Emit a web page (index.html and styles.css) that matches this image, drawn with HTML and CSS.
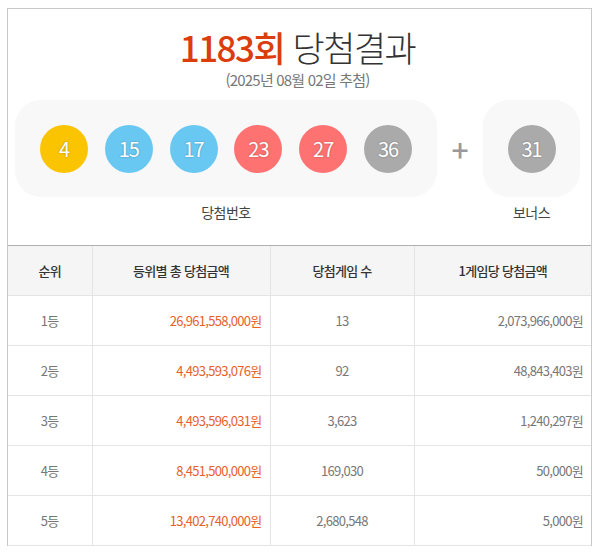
FILE: index.html
```html
<!DOCTYPE html>
<html lang="ko">
<head>
<meta charset="utf-8">
<title>1183회 당첨결과</title>
<link rel="stylesheet" href="styles.css">
</head>
<body>
<div class="wrap">
  <div class="top">
    <h2 class="title"><strong>1183회</strong> 당첨결과</h2>
    <p class="date">(2025년 08월 02일 추첨)</p>
    <div class="nums">
      <div class="group">
        <div class="panel win">
          <span class="ball yellow">4</span>
          <span class="ball blue">15</span>
          <span class="ball blue">17</span>
          <span class="ball red">23</span>
          <span class="ball red">27</span>
          <span class="ball gray">36</span>
        </div>
        <div class="label">당첨번호</div>
      </div>
      <div class="plus">+</div>
      <div class="group">
        <div class="panel bonus">
          <span class="ball gray">31</span>
        </div>
        <div class="label">보너스</div>
      </div>
    </div>
  </div>
  <table class="result">
    <colgroup>
      <col class="c1"><col class="c2"><col class="c3"><col class="c4">
    </colgroup>
    <thead>
      <tr><th>순위</th><th>등위별 총 당첨금액</th><th>당첨게임 수</th><th>1게임당 당첨금액</th></tr>
    </thead>
    <tbody>
      <tr><td class="ctr">1등</td><td class="amt">26,961,558,000원</td><td class="ctr">13</td><td class="rt">2,073,966,000원</td></tr>
      <tr><td class="ctr">2등</td><td class="amt">4,493,593,076원</td><td class="ctr">92</td><td class="rt">48,843,403원</td></tr>
      <tr><td class="ctr">3등</td><td class="amt">4,493,596,031원</td><td class="ctr">3,623</td><td class="rt">1,240,297원</td></tr>
      <tr><td class="ctr">4등</td><td class="amt">8,451,500,000원</td><td class="ctr">169,030</td><td class="rt">50,000원</td></tr>
      <tr><td class="ctr">5등</td><td class="amt">13,402,740,000원</td><td class="ctr">2,680,548</td><td class="rt">5,000원</td></tr>
    </tbody>
  </table>
</div>
</body>
</html>
```
FILE: styles.css
```css
* { box-sizing: border-box; }
body {
  margin: 0;
  background: #fff;
  font-family: "Noto Sans CJK KR", "Noto Sans", sans-serif;
  color: #333;
}
.wrap {
  margin: 8px 0 0 7px;
  width: 585px;
  border: 1px solid #c9c9c9;
  border-bottom: none;
}
.top {
  padding: 16px 11px 23px 7px;
  text-align: center;
}
.title {
  margin: 0;
  font-size: 35px;
  line-height: 44px;
  font-weight: 300;
  letter-spacing: -1.5px;
  color: #333;
}
.title strong {
  color: #db3d0d;
  font-weight: 500;
}
.date {
  margin: 1px 0 0;
  font-size: 15px;
  line-height: 20px;
  color: #777;
  letter-spacing: -0.8px;
}
.nums {
  margin-top: 10px;
  display: flex;
  align-items: flex-start;
}
.group {
  display: flex;
  flex-direction: column;
  align-items: center;
}
.panel {
  height: 97px;
  background: #f8f8f8;
  border-radius: 26px;
  display: flex;
  align-items: center;
}
.win {
  width: 422px;
  padding-left: 25px;
  gap: 16.8px;
}
.bonus {
  width: 97px;
  justify-content: center;
}
.plus {
  width: 46px;
  height: 97px;
  display: flex;
  align-items: center;
  justify-content: center;
  font-size: 30px;
  font-weight: 500;
  color: #999;
}
.ball {
  width: 48px;
  height: 48px;
  border-radius: 50%;
  display: flex;
  align-items: center;
  justify-content: center;
  color: #fff;
  font-size: 20px;
  font-weight: 400;
  letter-spacing: -1px;
  text-shadow: 0 0 2px rgba(0,0,0,0.35);
}
.yellow { background: #fbc400; }
.blue { background: #69c8f2; }
.red { background: #ff7272; }
.gray { background: #aaaaaa; }
.label {
  margin-top: 5px;
  font-size: 14px;
  line-height: 20px;
  color: #444;
  letter-spacing: -0.5px;
}
.result {
  width: 583px;
  border-collapse: collapse;
  table-layout: fixed;
  font-size: 13px;
  letter-spacing: -0.7px;
}
.c1 { width: 84px; }
.c2 { width: 178px; }
.c3 { width: 144px; }
.c4 { width: 177px; }
.result th {
  height: 50px;
  background: #f5f5f5;
  border-top: 1px solid #b0b0b0;
  border-bottom: 1px solid #e4e4e4;
  border-left: 1px solid #e4e4e4;
  font-weight: 500;
  color: #333;
}
.result td {
  height: 50px;
  border-bottom: 1px solid #e4e4e4;
  border-left: 1px solid #e4e4e4;
  color: #777;
}
.result th:first-child, .result td:first-child { border-left: none; }
.ctr { text-align: center; }
.rt { text-align: right; padding-right: 8px; }
.amt { text-align: right; padding-right: 8px; color: #e8612a !important; }
```
